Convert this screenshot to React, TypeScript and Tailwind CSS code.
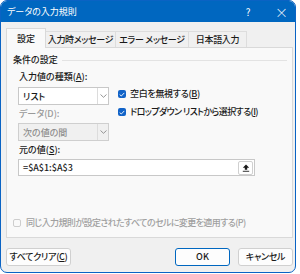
import React from 'react';

const font = "font-['Noto_Sans_CJK_JP',sans-serif] [font-feature-settings:'palt']";

function Key({ k }: { k: string }) {
  return <span className="underline underline-offset-[1px]">{k}</span>;
}

function Chevron() {
  return (
    <svg width="7" height="4" viewBox="0 0 7 4" className="text-[#8a8a8a]">
      <path d="M0.5 0.5 L3.5 3.3 L6.5 0.5" fill="none" stroke="currentColor" strokeWidth="0.9" />
    </svg>
  );
}

function Select({ value, disabled }: { value: string; disabled?: boolean }) {
  return (
    <div
      className={`flex h-[18px] w-[91px] items-stretch border ${
        disabled ? 'border-[#cfcfcf] bg-[#f0f0f0] text-[#8d8d8d]' : 'border-[#c8c8c8] bg-white text-[#1a1a1a]'
      }`}
    >
      <div className="flex flex-1 items-center pl-[4px] leading-none">{value}</div>
      <div className="flex w-[11px] items-center justify-center border-l border-[#dcdcdc]">
        <Chevron />
      </div>
    </div>
  );
}

function Check({ checked, disabled }: { checked?: boolean; disabled?: boolean }) {
  if (checked) {
    return (
      <div className="flex h-[8px] w-[8px] items-center justify-center rounded-[2px] bg-[#1163c8]">
        <svg width="6" height="5" viewBox="0 0 6 5">
          <path d="M0.7 2.6 L2.3 4 L5.3 0.9" fill="none" stroke="white" strokeWidth="0.9" />
        </svg>
      </div>
    );
  }
  return (
    <div
      className={`h-[8px] w-[8px] rounded-[2px] border ${disabled ? 'border-[#cdcdcd] bg-[#f9f9f9]' : 'border-[#777] bg-white'}`}
    />
  );
}

function Tab({ label, active, w }: { label: string; active?: boolean; w: string }) {
  if (active) {
    return (
      <div className={`${w} relative z-10 -mb-px flex h-[20px] items-center justify-center border border-b-0 border-[#d9d9d9] bg-[#f9f9f9] text-[#1a1a1a]`}>
        {label}
      </div>
    );
  }
  return (
    <div className={`${w} flex h-[16px] items-center justify-center border border-l-0 border-b-0 border-[#dddddd] tracking-[-0.3px] text-[#1a1a1a]`}>
      {label}
    </div>
  );
}

export default function App() {
  return (
    <div className={`h-[274px] w-[300px] bg-white ${font} text-[9px] font-medium leading-[12px]`}>
      <div className="flex h-[273px] w-[296px] flex-col overflow-hidden rounded-[7px] border border-[#0a63c4] bg-[#f0f0f0]">
        {/* title bar */}
        <div className="flex h-[21px] shrink-0 items-center bg-[#0067c0] pl-[6px] font-normal text-white">
          <span className="flex-1">データの入力規則</span>
          <span className="w-[10px] text-center text-[10px]">?</span>
          <span className="ml-[22px] mr-[8px] w-[12px] text-center text-[13px] font-light leading-none">×</span>
        </div>

        <div className="flex flex-1 flex-col pl-[5px] pr-[2px]">
          {/* tabs */}
          <div className="mt-[6px] flex items-end">
            <Tab label="設定" active w="w-[40px]" />
            <Tab label="入力時メッセージ" w="w-[70px]" />
            <Tab label="エラー メッセージ" w="w-[73px]" />
            <Tab label="日本語入力" w="w-[58px]" />
          </div>

          {/* panel */}
          <div className="flex h-[191px] flex-col border border-[#d9d9d9] bg-[#f9f9f9] pl-[6px] pr-[5px] pt-[6px] text-[#1a1a1a]">
            <div className="flex items-center">
              <span>条件の設定</span>
              <div className="ml-[4px] h-px flex-1 bg-[#e3e3e3]" />
            </div>

            <div className="pl-[5px]">
              <div className="mt-[5px] flex">
                <div className="flex flex-col">
                  <div className="pl-[1px]">
                    入力値の種類(<Key k="A" />):
                  </div>
                  <div className="mt-[4px]">
                    <Select value="リスト" />
                  </div>
                  <div className="mt-[3px] pl-[1px] text-[#9a9a9a]">データ(D):</div>
                  <div className="mt-[3px]">
                    <Select value="次の値の間" disabled />
                  </div>
                </div>
                <div className="ml-[9px] mt-[17px] flex flex-col gap-[6px]">
                  <div className="flex items-center gap-[4px]">
                    <Check checked />
                    <span className="tracking-[-0.3px]">
                      空白を無視する(<Key k="B" />)
                    </span>
                  </div>
                  <div className="flex items-center gap-[4px]">
                    <Check checked />
                    <span className="tracking-[-0.6px]">
                      ドロップダウン リストから選択する(<Key k="I" />)
                    </span>
                  </div>
                </div>
              </div>

              <div className="mt-[3px] pl-[1px]">
                元の値(<Key k="S" />):
              </div>
              <div className="mt-[3px] flex h-[17px] w-[237px] items-center border border-[#c8c8c8] bg-white pl-[4px] pr-[1px]">
                <span className="flex-1">=$A$1:$A$3</span>
                <div className="flex h-[14px] w-[15px] items-center justify-center rounded-[2px] border border-[#d0d0d0] bg-white">
                  <svg width="8" height="8" viewBox="0 0 8 8">
                    <path d="M4 0.6 L7.2 3.8 L5.2 3.8 L5.2 5.8 L2.8 5.8 L2.8 3.8 L0.8 3.8 Z" fill="#1a1a1a" />
                    <rect x="0.8" y="6.8" width="6.4" height="0.9" fill="#1a1a1a" />
                  </svg>
                </div>
              </div>
            </div>

            <div className="mb-[8px] mt-auto flex items-center gap-[5px]">
              <Check disabled />
              <span className="tracking-[-0.6px] text-[#a0a0a0]">同じ入力規則が設定されたすべてのセルに変更を適用する(P)</span>
            </div>
          </div>

          {/* buttons */}
          <div className="mt-[10px] flex">
            <button className="flex h-[18px] w-[65px] items-center justify-center rounded-[3px] border border-[#d0d0d0] bg-[#fdfdfd] tracking-[-0.3px] text-[#1a1a1a]">
              すべてクリア(<Key k="C" />)
            </button>
            <div className="flex-1" />
            <button className="flex h-[18px] w-[55px] items-center justify-center rounded-[3px] border border-[#0067c0] bg-[#fdfdfd] text-[#1a1a1a]">
              OK
            </button>
            <button className="ml-[8px] flex h-[18px] w-[55px] items-center justify-center rounded-[3px] border border-[#d0d0d0] bg-[#fdfdfd] tracking-[-0.3px] text-[#1a1a1a]">
              キャンセル
            </button>
          </div>
        </div>
      </div>
    </div>
  );
}
